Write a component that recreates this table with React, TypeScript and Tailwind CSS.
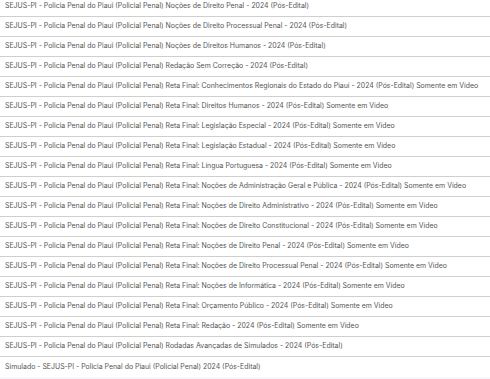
import React from "react";

const P = "SEJUS-PI - Policia Penal do Piaui (Policial Penal) ";
const items = [
  P + "Noções de Direito Penal - 2024 (Pós-Edital)",
  P + "Noções de Direito Processual Penal - 2024 (Pós-Edital)",
  P + "Noções de Direitos Humanos - 2024 (Pós-Edital)",
  P + "Redação Sem Correção - 2024 (Pós-Edital)",
  P + "Reta Final: Conhecimentos Regionais do Estado do Piauí - 2024 (Pós-Edital) Somente em Vídeo",
  P + "Reta Final: Direitos Humanos - 2024 (Pós-Edital) Somente em Vídeo",
  P + "Reta Final: Legislação Especial - 2024 (Pós-Edital) Somente em Vídeo",
  P + "Reta Final: Legislação Estadual - 2024 (Pós-Edital) Somente em Vídeo",
  P + "Reta Final: Língua Portuguesa - 2024 (Pós-Edital) Somente em Vídeo",
  P + "Reta Final: Noções de Administração Geral e Pública - 2024 (Pós-Edital) Somente em Vídeo",
  P + "Reta Final: Noções de Direito Administrativo - 2024 (Pós-Edital) Somente em Vídeo",
  P + "Reta Final: Noções de Direito Constitucional - 2024 (Pós-Edital) Somente em Vídeo",
  P + "Reta Final: Noções de Direito Penal - 2024 (Pós-Edital) Somente em Vídeo",
  P + "Reta Final: Noções de Direito Processual Penal - 2024 (Pós-Edital) Somente em Vídeo",
  P + "Reta Final: Noções de Informática - 2024 (Pós-Edital) Somente em Vídeo",
  P + "Reta Final: Orçamento Público - 2024 (Pós-Edital) Somente em Vídeo",
  P + "Reta Final: Redação - 2024 (Pós-Edital) Somente em Vídeo",
  P + "Rodadas Avançadas de Simulados - 2024 (Pós-Edital)",
  "Simulado - SEJUS-PI - Policia Penal do Piaui (Policial Penal) 2024 (Pós-Edital)",
];

export default function App() {
  return (
    <div className="w-[490px] h-[379px] overflow-hidden bg-[#f8f8fc] font-['Inter',sans-serif]">
      <div className="-mt-[3px] bg-white">
        {items.map((t, i) => (
          <div
            key={i}
            className={`h-[20px] flex items-center pl-[5px] text-[6.95px] text-[#555] whitespace-nowrap ${i < items.length - 1 ? "border-b border-[#cfcfcf]" : ""}`}
          >
            {t}
          </div>
        ))}
      </div>
    </div>
  );
}
